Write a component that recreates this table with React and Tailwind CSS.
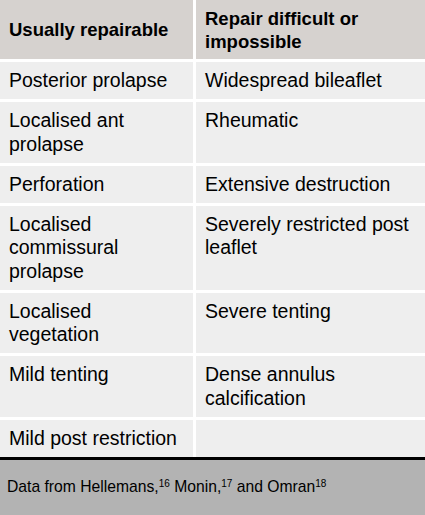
// ---------------------------- Data ----------------------------
const rows = [
    ["Posterior prolapse", "Widespread bileaflet"],
    ["Localised ant prolapse", "Rheumatic"],
    ["Perforation", "Extensive destruction"],
    ["Localised commissural prolapse", "Severely restricted post leaflet"],
    ["Localised vegetation", "Severe tenting"],
    ["Mild tenting", "Dense annulus calcification"],
    ["Mild post restriction", ""],
];

const font = { fontFamily: '"Liberation Sans", Arial, sans-serif' };

// ---------------------------- Component ----------------------------
const App = () => {
    return (
        <div className="w-[425px] h-[515px] bg-white flex flex-col text-black" style={font}>
            {/* Header */}
            <div className="grid grid-cols-[193px_1fr] gap-x-[3px] h-[59px]">
                <div className="bg-[#d6d2cf] flex items-center pl-[9px] text-[18.5px] leading-[23px] font-bold">
                    Usually repairable
                </div>
                <div className="bg-[#d6d2cf] flex items-center pl-[9px] pr-2 text-[18.5px] leading-[23px] font-bold">
                    Repair difficult or
                    <br />
                    impossible
                </div>
            </div>

            {/* Body rows */}
            <div className="flex flex-col gap-y-[3px] mt-[3px]">
                {rows.map((row, idx) => (
                    <div key={idx} className="grid grid-cols-[193px_1fr] gap-x-[3px]">
                        <div className="bg-[#eeeeee] pl-[9px] pr-2 pt-[7px] pb-[6.5px] text-[19.5px] leading-[23.5px]">
                            {row[0]}
                        </div>
                        <div className="bg-[#eeeeee] pl-[9px] pr-2 pt-[7px] pb-[6.5px] text-[19.5px] leading-[23.5px]">
                            {row[1]}
                        </div>
                    </div>
                ))}
            </div>

            {/* Footer */}
            <div className="flex-1 border-t-[3px] border-black bg-[#b3b3b3] flex items-center pl-[7px] text-[15.7px]">
                <span>
                    Data from Hellemans,<sup className="text-[10px]">16</sup> Monin,
                    <sup className="text-[10px]">17</sup> and Omran<sup className="text-[10px]">18</sup>
                </span>
            </div>
        </div>
    );
};

export default App;
